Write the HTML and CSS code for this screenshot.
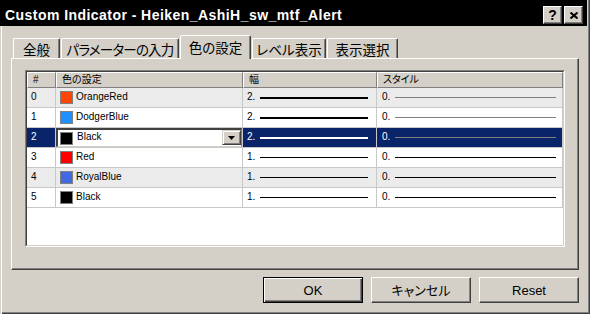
FILE: index.html
```html
<!DOCTYPE html>
<html lang="ja">
<head>
    <meta charset="UTF-8">
    <meta name="viewport" content="width=device-width, initial-scale=1.0">
    <title>Custom Indicator - Heiken_AshiH_sw_mtf_Alert</title>
    <link rel="stylesheet" href="styles.css">
</head>
<body>
<div class="window">
    <div class="titlebar">
        <span class="title">Custom Indicator - Heiken_AshiH_sw_mtf_Alert</span>
        <div class="caption-buttons">
            <div class="cap-btn">?</div>
            <div class="cap-btn">
                <svg width="8" height="7" viewBox="0 0 8 7"><path d="M0.5 0.5 L7.5 6.5 M7.5 0.5 L0.5 6.5" stroke="#000" stroke-width="2" fill="none"/></svg>
            </div>
        </div>
    </div>

    <div class="content">
        <!-- pestañas -->
        <div class="tabs">
            <div class="tab tab-general">全般</div>
            <div class="tab tab-params">パラメーターの入力</div>
            <div class="tab tab-colors active">色の設定</div>
            <div class="tab tab-levels">レベル表示</div>
            <div class="tab tab-show">表示選択</div>
        </div>

        <div class="panel">
            <div class="list">
                <div class="list-inner">
                    <div class="list-header">
                        <div class="hcell">#</div>
                        <div class="hcell">色の設定</div>
                        <div class="hcell">幅</div>
                        <div class="hcell">スタイル</div>
                    </div>

                    <div class="row alt">
                        <div class="cell num"><span class="label">0</span></div>
                        <div class="cell color"><span class="swatch sw-orangered"></span><span class="label">OrangeRed</span></div>
                        <div class="cell width"><span class="label">2.</span><span class="line thick"></span></div>
                        <div class="cell style"><span class="label">0.</span><span class="line gray"></span></div>
                    </div>
                    <div class="row">
                        <div class="cell num"><span class="label">1</span></div>
                        <div class="cell color"><span class="swatch sw-dodgerblue"></span><span class="label">DodgerBlue</span></div>
                        <div class="cell width"><span class="label">2.</span><span class="line thick"></span></div>
                        <div class="cell style"><span class="label">0.</span><span class="line gray"></span></div>
                    </div>
                    <div class="row selected">
                        <div class="cell num"><span class="label">2</span></div>
                        <div class="cell color">
                            <div class="combo">
                                <span class="swatch sw-black"></span><span class="label">Black</span>
                                <div class="combo-btn">
                                    <svg width="7" height="4" viewBox="0 0 7 4"><path d="M0 0 H7 L3.5 4 Z" fill="#000"/></svg>
                                </div>
                            </div>
                        </div>
                        <div class="cell width"><span class="label">2.</span><span class="line thick"></span></div>
                        <div class="cell style"><span class="label">0.</span><span class="line gray"></span></div>
                    </div>
                    <div class="row">
                        <div class="cell num"><span class="label">3</span></div>
                        <div class="cell color"><span class="swatch sw-red"></span><span class="label">Red</span></div>
                        <div class="cell width"><span class="label">1.</span><span class="line"></span></div>
                        <div class="cell style"><span class="label">0.</span><span class="line"></span></div>
                    </div>
                    <div class="row alt">
                        <div class="cell num"><span class="label">4</span></div>
                        <div class="cell color"><span class="swatch sw-royalblue"></span><span class="label">RoyalBlue</span></div>
                        <div class="cell width"><span class="label">1.</span><span class="line"></span></div>
                        <div class="cell style"><span class="label">0.</span><span class="line"></span></div>
                    </div>
                    <div class="row">
                        <div class="cell num"><span class="label">5</span></div>
                        <div class="cell color"><span class="swatch sw-black"></span><span class="label">Black</span></div>
                        <div class="cell width"><span class="label">1.</span><span class="line"></span></div>
                        <div class="cell style"><span class="label">0.</span><span class="line"></span></div>
                    </div>
                </div>
            </div>
        </div>

        <div class="buttons">
            <div class="btn default">OK</div>
            <div class="btn">キャンセル</div>
            <div class="btn">Reset</div>
        </div>
    </div>
</div>
</body>
</html>
```

FILE: styles.css
```css
body { margin: 0; font-family: "Liberation Sans", "Noto Sans CJK JP", sans-serif; background: #d4d0c8; }

.window {
    width: 590px; height: 314px; box-sizing: border-box; background: #d4d0c8; overflow: hidden;
    box-shadow: inset 1px 0 #d4d0c8, inset 2px 0 #fff, inset -1px -1px #404040, inset -2px -2px #808080;
}

/* barra de título */
.titlebar {
    height: 26px; margin-right: 3px; padding: 4px 4px 0 5px; box-sizing: border-box;
    background: #000; color: #fff; display: flex; align-items: center; justify-content: space-between;
}
.title { font: bold 14px "Liberation Sans", sans-serif; letter-spacing: 0.45px; white-space: nowrap; }
.caption-buttons { display: flex; gap: 2px; }
.cap-btn {
    width: 19px; height: 18px; box-sizing: border-box; background: #d4d0c8; color: #000;
    border: 1px solid; border-color: #fff #404040 #404040 #fff; box-shadow: inset -1px -1px #808080;
    display: flex; align-items: center; justify-content: center;
    font: bold 14px "Liberation Sans", sans-serif; line-height: 1;
}

.content { padding: 9px 11px 0 11px; }

/* pestañas */
.tabs { display: flex; align-items: flex-end; gap: 1px; height: 23px; padding-left: 2px; }
.tab {
    height: 20px; box-sizing: border-box; background: #d4d0c8; color: #000;
    border-top: 1px solid #fff; border-left: 1px solid #fff; border-right: 1px solid #404040;
    border-radius: 2px 2px 0 0; box-shadow: inset -1px 0 #808080;
    display: flex; align-items: center; justify-content: center; padding-top: 2px;
    font: 13.5px "Noto Sans CJK JP", sans-serif; font-feature-settings: "palt"; line-height: 1; white-space: nowrap;
}
.tab.active { height: 24px; margin-bottom: -1px; position: relative; z-index: 1; padding-top: 0; }
.tab-general { width: 47px; }
.tab-params { width: 118px; letter-spacing: -0.8px; }
.tab-colors { width: 71px; }
.tab-levels { width: 74px; }
.tab-show { width: 71px; }

.panel {
    height: 212px; box-sizing: border-box; padding: 11px 13px 22px 13px;
    border-top: 1px solid #fff; border-left: 1px solid #fff;
    border-right: 1px solid #404040; border-bottom: 1px solid #404040;
    box-shadow: inset -1px -1px #808080;
}

/* lista */
.list { height: 177px; box-sizing: border-box; border: 1px solid; border-color: #808080 #fff #fff #808080; }
.list-inner { height: 100%; box-sizing: border-box; background: #fff; border: 1px solid; border-color: #404040 #d4d0c8 #d4d0c8 #404040; }

.list-header, .row { display: grid; grid-template-columns: 29px 187px 134px 1fr; }
.list-header { height: 16px; background: #d4d0c8; }
.hcell {
    box-sizing: border-box; border: 1px solid; border-color: #fff #808080 #808080 #fff;
    padding-left: 5px; display: flex; align-items: center;
    font-size: 10px; line-height: 1; font-feature-settings: "palt"; color: #000;
}

.row { height: 20px; box-sizing: border-box; border-bottom: 1px solid #c8c8c8; font-size: 10px; color: #000; }
.row.alt { background: #ebebeb; }
.cell { border-right: 1px solid #c8c8c8; display: flex; align-items: center; min-width: 0; }
.label { line-height: 10px; margin-bottom: 2px; white-space: nowrap; }
.num { padding-left: 4px; }
.color { padding-left: 4px; }
.width { padding: 0 8px 0 4px; }
.style { padding: 0 6px 0 5px; }
.swatch { width: 11px; height: 11px; border: 1px solid #808080; margin-right: 3px; flex: none; }
.sw-orangered { background: #ff4500; }
.sw-dodgerblue { background: #1e90ff; }
.sw-black { background: #000; }
.sw-red { background: #f00; }
.sw-royalblue { background: #4169e1; }

.line { flex: 1; height: 1px; background: #000; margin-left: 5px; }
.line.thick { height: 2px; }
.line.gray { background: #808080; }

.row.selected .num, .row.selected .width, .row.selected .style { background: #0a246a; color: #fff; }
.row.selected .width .line { background: #fff; }
.row.selected .style .line { background: #808080; }
.row.selected .color { padding: 0; background: #fff; align-items: stretch; }

.combo {
    flex: 1; box-sizing: border-box; background: #fff; display: flex; align-items: center;
    border-top: 2px solid #404040; border-left: 2px solid #404040; border-right: 1px solid #808080; border-bottom: 1px solid #d4d0c8;
    padding-left: 2px;
}
.combo .swatch { margin-right: 4px; }
.combo .label { flex: 1; }
.combo-btn {
    width: 19px; height: 15px; box-sizing: border-box; align-self: flex-start; background: #d4d0c8;
    border: 1px solid; border-color: #d4d0c8 #404040 #404040 #d4d0c8;
    box-shadow: inset 1px 1px #fff, inset -1px -1px #808080;
    display: flex; align-items: center; justify-content: center;
}

/* botones */
.buttons { display: flex; justify-content: flex-end; gap: 8px; margin-top: 7px; }
.btn {
    width: 100px; height: 26px; box-sizing: border-box; background: #d4d0c8; color: #000;
    border: 1px solid; border-color: #fff #404040 #404040 #fff; box-shadow: inset -1px -1px #808080;
    display: flex; align-items: center; justify-content: center;
    font: 13px "Liberation Sans", "Noto Sans CJK JP", sans-serif; font-feature-settings: "palt"; line-height: 1;
}
.btn.default { border-color: #000; box-shadow: inset 1px 1px #fff, inset -1px -1px #404040, inset -2px -2px #808080; }
```
